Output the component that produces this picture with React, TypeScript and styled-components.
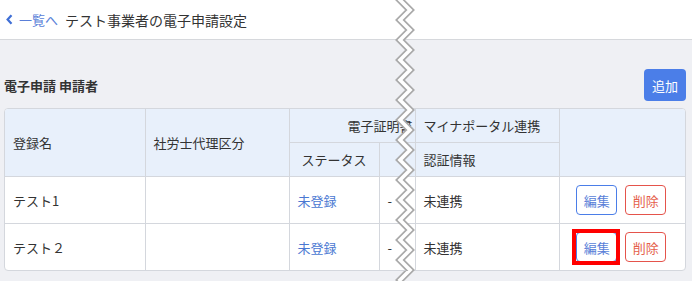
import React from "react";
import styled, { createGlobalStyle } from "styled-components";

const Global = createGlobalStyle`
  html, body { margin: 0; padding: 0; }
  body {
    background: #eff0f4;
    font-family: "Noto Sans CJK JP", "Noto Sans", sans-serif;
    color: #333;
    width: 692px;
    height: 281px;
    overflow: hidden;
  }
`;

const Page = styled.div`
  position: relative;
  width: 692px;
  height: 281px;
  overflow: hidden;
  background: #eff0f4;
`;

const TopBar = styled.header`
  height: 39px;
  background: #fff;
  border-bottom: 1px solid #d6d8dc;
  display: flex;
  align-items: center;
  padding-left: 6px;
  gap: 7px;
`;

const BackLink = styled.a`
  display: flex;
  align-items: center;
  gap: 6px;
  color: #5a7fd8;
  font-size: 13px;
  text-decoration: none;
`;

const Title = styled.h1`
  margin: 0;
  font-size: 14px;
  font-weight: 400;
  color: #333;
`;

const Main = styled.main`
  padding: 29px 6px 0 4px;
  display: flex;
  flex-direction: column;
  gap: 7px;
`;

const SectionHead = styled.div`
  display: flex;
  align-items: center;
  justify-content: space-between;
  height: 32px;
`;

const SectionTitle = styled.h2`
  margin: 0;
  font-size: 13px;
  font-weight: 700;
  color: #333;
`;

const AddButton = styled.button`
  width: 42px;
  height: 32px;
  border: none;
  border-radius: 4px;
  background: #4b7ee8;
  color: #fff;
  font-family: inherit;
  font-size: 13px;
  padding: 0;
`;

const TableWrap = styled.div`
  border: 1px solid #d4d7dd;
  border-radius: 4px;
  overflow: hidden;
  background: #fff;
`;

const Table = styled.table`
  width: 100%;
  border-collapse: collapse;
  border-style: hidden;
  table-layout: fixed;
  font-size: 13px;
`;

const Th = styled.th<{ $align?: "left" | "center"; $pad?: number }>`
  background: #e8f0fb;
  border: 1px solid #d4d7dd;
  font-weight: 400;
  color: #333;
  text-align: ${(p) => p.$align ?? "left"};
  padding: 0 0 0 ${(p) => (p.$pad ?? 8)}px;
  height: 33px;
  white-space: nowrap;
  overflow: hidden;
`;

const Td = styled.td<{ $tone?: "link" | "plain" }>`
  border: 1px solid #d4d7dd;
  height: 46px;
  padding: 0 0 0 8px;
  color: ${(p) => (p.$tone === "link" ? "#4a78d2" : "#333")};
  white-space: nowrap;
`;

const Actions = styled.div`
  display: flex;
  justify-content: center;
  gap: 8px;
  padding-right: 10px;
`;

const SmallButton = styled.button<{ $variant: "edit" | "delete"; $marked?: boolean }>`
  position: relative;
  width: 41px;
  height: 30px;
  padding: 0;
  background: #fff;
  border-radius: 4px;
  font-family: inherit;
  font-size: 13px;
  border: 1px solid ${(p) => (p.$variant === "edit" ? "#4b7ee8" : "#e5534b")};
  color: ${(p) => (p.$variant === "edit" ? "#5a7fd8" : "#e5604b")};

  &::after {
    content: "";
    display: ${(p) => (p.$marked ? "block" : "none")};
    position: absolute;
    inset: -4px -4px -4px -5px;
    border: 4px solid #ff0000;
  }
`;

const Tear = styled.svg`
  position: absolute;
  top: 0;
  left: 390px;
  pointer-events: none;
`;

function Zigzag() {
  const pts: string[] = [];
  for (let y = -20; y <= 300; y += 10) {
    const left = Math.round((y + 20) / 10) % 2 === 0;
    pts.push(`${left ? 10 : 20},${y}`);
  }
  const d = pts.join(" ");
  return (
    <Tear width="30" height="281" viewBox="0 0 30 281">
      <polyline points={d} fill="none" stroke="#a9a9a9" strokeWidth="7" strokeLinejoin="miter" strokeMiterlimit="10" />
      <polyline points={d} fill="none" stroke="#ffffff" strokeWidth="3.6" strokeLinejoin="miter" strokeMiterlimit="10" />
    </Tear>
  );
}

const rows = [
  { name: "テスト1", marked: false },
  { name: "テスト２", marked: true },
];

export default function App() {
  return (
    <Page>
      <Global />
      <TopBar>
        <BackLink href="#">
          <svg width="7" height="11" viewBox="0 0 7 11">
            <path d="M5.5 1.2 L1.6 5.5 L5.5 9.8" fill="none" stroke="#3f6fd6" strokeWidth="2.2" />
          </svg>
          一覧へ
        </BackLink>
        <Title>テスト事業者の電子申請設定</Title>
      </TopBar>
      <Main>
        <SectionHead>
          <SectionTitle>電子申請 申請者</SectionTitle>
          <AddButton>追加</AddButton>
        </SectionHead>
        <TableWrap>
          <Table>
            <colgroup>
              <col style={{ width: 140 }} />
              <col style={{ width: 144 }} />
              <col style={{ width: 90 }} />
              <col style={{ width: 36 }} />
              <col style={{ width: 144 }} />
              <col />
            </colgroup>
            <thead>
              <tr>
                <Th rowSpan={2}>登録名</Th>
                <Th rowSpan={2}>社労士代理区分</Th>
                <Th colSpan={2} $pad={58}>電子証明書</Th>
                <Th>マイナポータル連携</Th>
                <Th rowSpan={2} />
              </tr>
              <tr>
                <Th $align="center" $pad={0}>ステータス</Th>
                <Th />
                <Th>認証情報</Th>
              </tr>
            </thead>
            <tbody>
              {rows.map((r) => (
                <tr key={r.name}>
                  <Td>{r.name}</Td>
                  <Td />
                  <Td $tone="link">未登録</Td>
                  <Td>-</Td>
                  <Td>未連携</Td>
                  <Td>
                    <Actions>
                      <SmallButton $variant="edit" $marked={r.marked}>編集</SmallButton>
                      <SmallButton $variant="delete">削除</SmallButton>
                    </Actions>
                  </Td>
                </tr>
              ))}
            </tbody>
          </Table>
        </TableWrap>
      </Main>
      <Zigzag />
    </Page>
  );
}
